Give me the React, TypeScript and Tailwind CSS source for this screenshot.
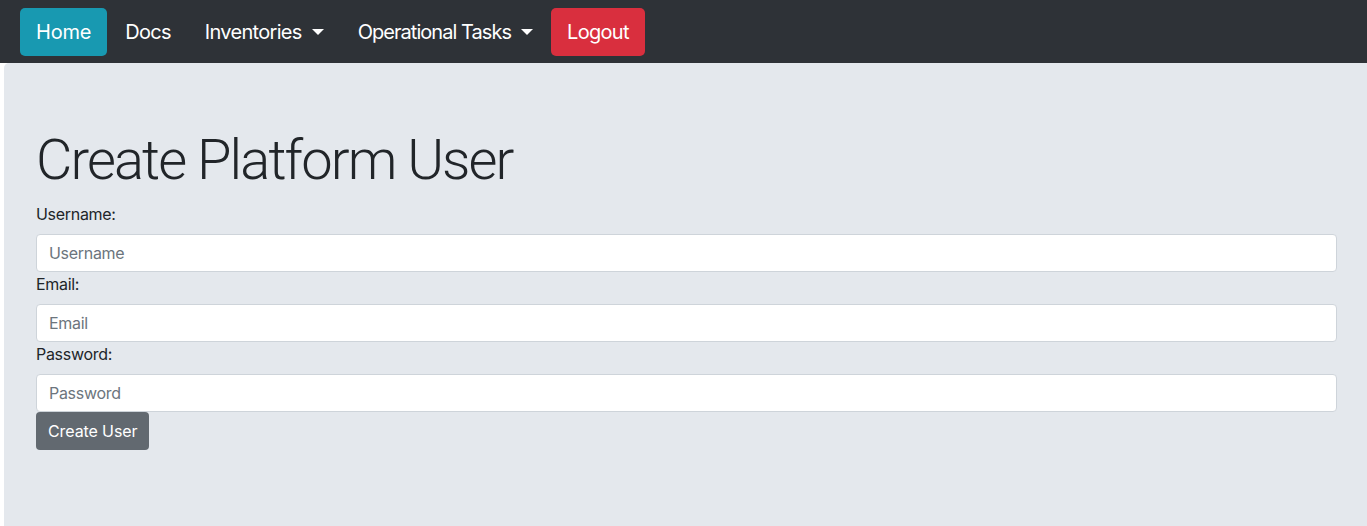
import React from 'react';

const font = { fontFamily: '"Inter", "Liberation Sans", sans-serif' };

function Caret() {
  return (
    <span className="ml-[10px] inline-block border-t-[6px] border-x-[6px] border-b-0 border-t-current border-x-transparent" />
  );
}

export default function App() {
  const fields = [
    { label: 'Username:', placeholder: 'Username', type: 'text' },
    { label: 'Email:', placeholder: 'Email', type: 'email' },
    { label: 'Password:', placeholder: 'Password', type: 'password' },
  ];

  return (
    <div className="min-h-[526px] bg-white text-[#212529]" style={font}>
      {/* Top navbar */}
      <nav className="h-[63px] bg-[#2e3237] flex items-center px-5 gap-[2px] text-[20px] tracking-[-0.7px]">
        <a className="h-12 px-4 flex items-center rounded-[5px] bg-[#1899b1] text-white tracking-[-0.2px]">Home</a>
        <a className="h-12 px-4 flex items-center rounded-[5px] text-white">Docs</a>
        <a className="h-12 px-4 flex items-center rounded-[5px] text-white">
          Inventories
          <Caret />
        </a>
        <a className="h-12 px-4 flex items-center rounded-[5px] text-white tracking-[-0.95px]">
          Operational Tasks
          <Caret />
        </a>
        <a className="h-12 px-4 flex items-center rounded-[5px] bg-[#d92f3e] text-white">Logout</a>
      </nav>

      {/* Jumbotron */}
      <div className="ml-1 bg-[#e4e8ed] rounded-tl-[5px] pt-16 pb-16 pl-8 pr-[30px] min-h-[463px]">
        <h1
          className="text-[56px] font-light leading-[1.2] mb-2 tracking-[-1.9px]"
          style={{ fontFamily: 'Roboto, "Inter", sans-serif' }}
        >
          Create Platform User
        </h1>
        <form className="flex flex-col tracking-[-0.3px]">
          {fields.map((f) => (
            <div key={f.label} className="flex flex-col">
              <label className="text-base leading-6 mb-2">{f.label}</label>
              <input
                type={f.type}
                placeholder={f.placeholder}
                className="h-[38px] w-full bg-white border border-[#ced4da] rounded-[4px] px-3 text-base text-[#495057] placeholder:text-[#6c757d] outline-none tracking-[-0.3px]"
              />
            </div>
          ))}
          <div>
            <button type="button" className="h-[38px] px-3 bg-[#626970] text-white text-base rounded-[4px] tracking-[-0.1px]">
              Create User
            </button>
          </div>
        </form>
      </div>
    </div>
  );
}
